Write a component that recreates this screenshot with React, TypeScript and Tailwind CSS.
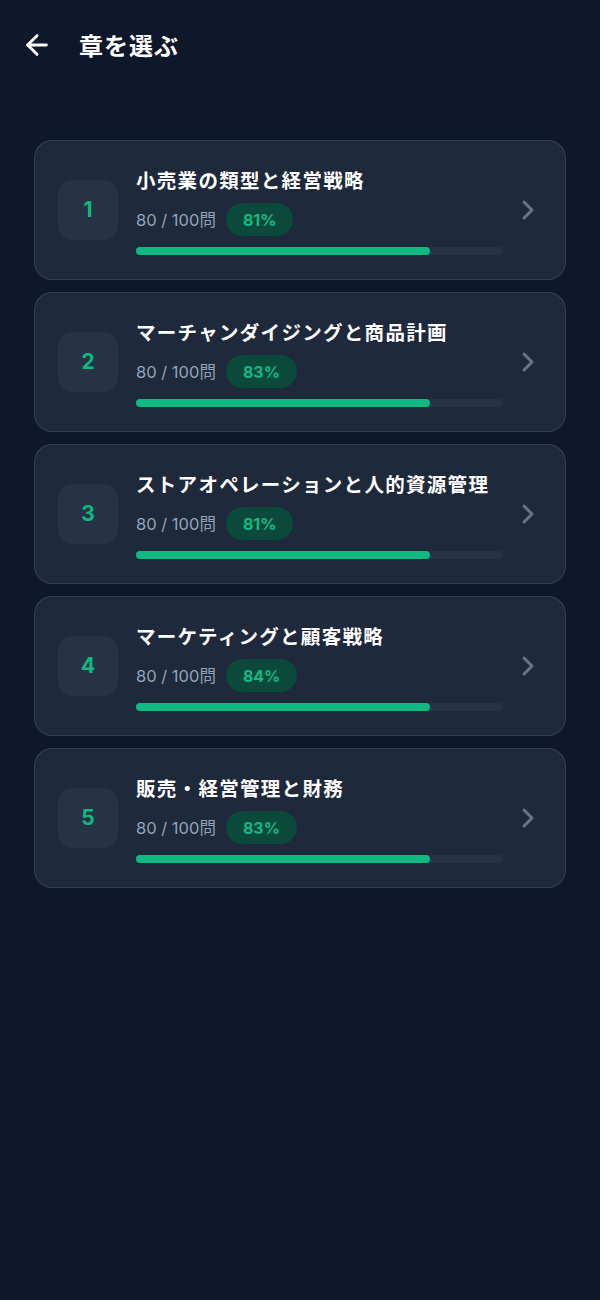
import React from "react";
import { ArrowLeft, ChevronRight } from "lucide-react";

const chapters = [
  { n: 1, title: "小売業の類型と経営戦略", pct: 81 },
  { n: 2, title: "マーチャンダイジングと商品計画", pct: 83 },
  { n: 3, title: "ストアオペレーションと人的資源管理", pct: 81 },
  { n: 4, title: "マーケティングと顧客戦略", pct: 84 },
  { n: 5, title: "販売・経営管理と財務", pct: 83 },
];

export default function App() {
  return (
    <div
      className="min-h-[1300px] w-[600px] bg-[#0f172a] text-white"
      style={{ fontFamily: '"Noto Sans CJK JP", "Noto Sans", Inter, sans-serif' }}
    >
      <div className="flex h-[90px] items-center pl-[21px]">
        <ArrowLeft size={32} strokeWidth={2.2} className="text-white" />
        <h1 className="ml-[26px] text-[24px] font-bold leading-none tracking-[1px]">章を選ぶ</h1>
      </div>
      <div className="mt-[50px] flex flex-col gap-[12px] px-[34px]">
        {chapters.map((c) => (
          <div
            key={c.n}
            className="flex h-[140px] items-center rounded-[18px] border border-[#3a475a]/80 bg-[#1e293b] pl-[23px] pr-[21px]"
          >
            <div
              className="flex h-[60px] w-[60px] shrink-0 items-center justify-center rounded-[14px] bg-[#263345] text-[21px] font-bold text-[#10b981]"
              style={{ fontFamily: 'Inter, "Noto Sans", sans-serif' }}
            >
              {c.n}
            </div>
            <div className="ml-[18px] flex w-[367px] flex-col">
              <div className="h-[30px] whitespace-nowrap text-[19.5px] font-bold leading-[30px] tracking-[1.3px] text-white">
                {c.title}
              </div>
              <div className="mt-[8px] flex h-[33px] items-center">
                <span className="text-[16.5px] text-[#94a3b8]">
                  <span style={{ fontFamily: 'Inter, "Noto Sans", sans-serif' }}>80 / 100</span>問
                </span>
                <span
                  className="ml-[10px] flex h-[33px] items-center rounded-full bg-[#0b4a3a] px-[17px] text-[16px] font-bold text-[#14b886]"
                  style={{ fontFamily: 'Inter, "Noto Sans", sans-serif' }}
                >
                  {c.pct}%
                </span>
              </div>
              <div className="mt-[11px] h-[8px] w-full rounded-full bg-[#263345]">
                <div className="h-full rounded-full bg-[#10b981]" style={{ width: "80%" }} />
              </div>
            </div>
            <div className="ml-auto">
              <ChevronRight size={32} strokeWidth={2.2} className="text-[#64748b]" />
            </div>
          </div>
        ))}
      </div>
    </div>
  );
}
